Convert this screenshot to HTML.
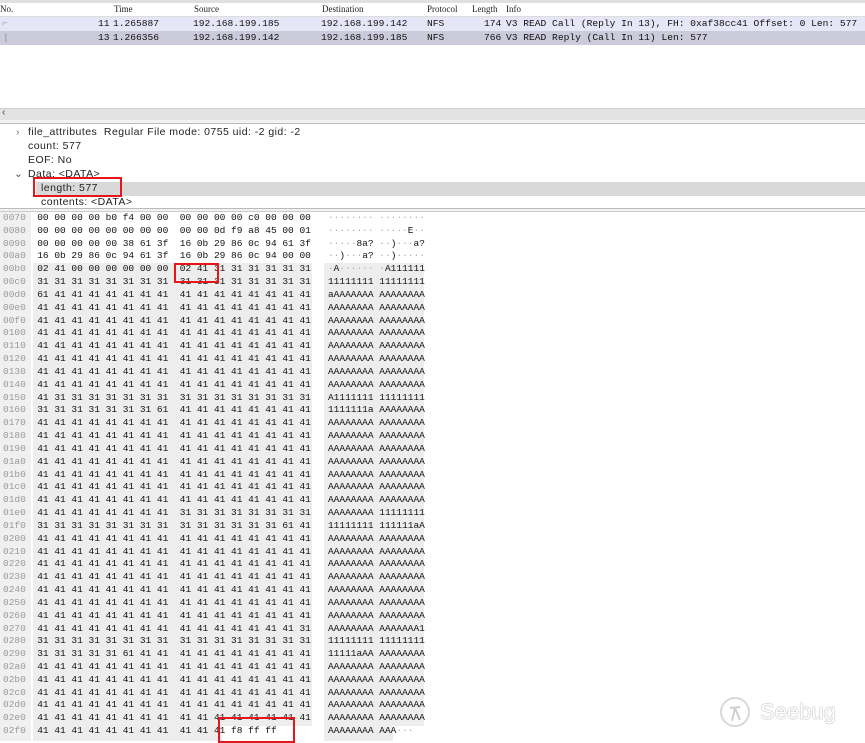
<!DOCTYPE html>
<html><head><meta charset="utf-8"><style>
*{margin:0;padding:0;box-sizing:border-box}
body{width:865px;height:741px;overflow:hidden;background:#fff;position:relative;font-family:"Liberation Sans",sans-serif}
.a{position:absolute}
.hdr{font-family:"Liberation Serif",serif;font-size:9px;color:#222;top:4px}
.pk{font-family:"Liberation Mono",monospace;font-size:9.6px;color:#111;height:14px;line-height:14px;width:865px;left:0}
.pk span{position:absolute;top:0}
.det{font-family:"Liberation Sans","DejaVu Sans",sans-serif;font-size:10.5px;letter-spacing:0.45px;color:#222;left:28px}
pre{font-family:"Liberation Mono",monospace;font-size:9.5px;line-height:12.83px;color:#111;position:absolute;left:3px;top:212px;margin:0}
.o{color:#9a9a9a}
.g{color:#aaa}
.box{position:absolute;border:2px solid #e8161b}
</style></head><body>
<!-- packet list -->
<div class="a" style="left:0;top:0;width:865px;height:3px;background:#e0e0e0"></div>
<div class="a" style="left:0;top:3px;width:865px;height:14px;background:#fff;border-bottom:1px solid #ddd"></div>
<div class="a hdr" style="left:0">No.</div>
<div class="a hdr" style="left:114px">Time</div>
<div class="a hdr" style="left:194px">Source</div>
<div class="a hdr" style="left:322px">Destination</div>
<div class="a hdr" style="left:427px">Protocol</div>
<div class="a hdr" style="left:472px">Length</div>
<div class="a hdr" style="left:506px">Info</div>
<div class="a pk" style="top:17px;background:#e6e6f8">
<span style="left:2px;color:#999">⌐</span><span style="left:98px">11</span><span style="left:113px">1.265887</span><span style="left:193px">192.168.199.185</span><span style="left:321px">192.168.199.142</span><span style="left:427px">NFS</span><span style="left:484px">174</span><span style="left:506px">V3 READ Call (Reply In 13), FH: 0xaf38cc41 Offset: 0 Len: 577</span></div>
<div class="a pk" style="top:31px;background:#cbcbdb">
<span style="left:3px;color:#888">|</span><span style="left:98px">13</span><span style="left:113px">1.266356</span><span style="left:193px">192.168.199.142</span><span style="left:321px">192.168.199.185</span><span style="left:427px">NFS</span><span style="left:484px">766</span><span style="left:506px">V3 READ Reply (Call In 11) Len: 577</span></div>
<div class="a" style="left:0;top:108px;width:865px;height:12px;background:#e3e3e3;border-top:1px solid #d0d0d0"></div>
<div class="a" style="left:2px;top:107px;font-size:10px;color:#444">‹</div>
<div class="a" style="left:0;top:120px;width:865px;height:4px;background:#f2f2f2;border-bottom:1px solid #bbb"></div>
<!-- details -->
<div class="a" style="left:36px;top:182px;width:829px;height:14px;background:#d9d9d9"></div>
<div class="a det" style="left:16px;top:126px;color:#777">›</div>
<div class="a det" style="top:126px">file_attributes&nbsp; Regular File mode: 0755 uid: -2 gid: -2</div>
<div class="a det" style="top:140px">count: 577</div>
<div class="a det" style="top:154px">EOF: No</div>
<div class="a det" style="left:14px;top:168px;color:#555">⌄</div>
<div class="a det" style="top:168px">Data: &lt;DATA&gt;</div>
<div class="a det" style="left:41px;top:182px">length: 577</div>
<div class="a det" style="left:41px;top:196px">contents: &lt;DATA&gt;</div>
<div class="box" style="left:33px;top:177px;width:89px;height:20px"></div>
<div class="a" style="left:0;top:208px;width:865px;height:4px;background:#f2f2f2;border-top:1px solid #bbb;border-bottom:1px solid #ccc"></div>
<!-- hex -->
<div class="a" style="left:0;top:212px;width:31px;height:529px;background:#f0f0f0"></div>
<div class="a" style="left:33px;top:263px;width:279px;height:478px;background:#ededed"></div>
<div class="a" style="left:324px;top:263px;width:100px;height:478px;background:#ededed"></div>
<div class="a" style="left:222px;top:726px;width:90px;height:15px;background:#fff"></div>
<div class="a" style="left:393px;top:726px;width:31px;height:15px;background:#fff"></div>
<pre><span class="o">0070</span>  00 00 00 00 b0 f4 00 00  00 00 00 00 c0 00 00 00   <span class="g">········ ········</span>
<span class="o">0080</span>  00 00 00 00 00 00 00 00  00 00 0d f9 a8 45 00 01   <span class="g">········ ·····</span>E<span class="g">··</span>
<span class="o">0090</span>  00 00 00 00 00 38 61 3f  16 0b 29 86 0c 94 61 3f   <span class="g">·····</span>8a? <span class="g">··</span>)<span class="g">···</span>a?
<span class="o">00a0</span>  16 0b 29 86 0c 94 61 3f  16 0b 29 86 0c 94 00 00   <span class="g">··</span>)<span class="g">···</span>a? <span class="g">··</span>)<span class="g">·····</span>
<span class="o">00b0</span>  02 41 00 00 00 00 00 00  02 41 31 31 31 31 31 31   <span class="g">·</span>A<span class="g">······ ·</span>A111111
<span class="o">00c0</span>  31 31 31 31 31 31 31 31  31 31 31 31 31 31 31 31   11111111 11111111
<span class="o">00d0</span>  61 41 41 41 41 41 41 41  41 41 41 41 41 41 41 41   aAAAAAAA AAAAAAAA
<span class="o">00e0</span>  41 41 41 41 41 41 41 41  41 41 41 41 41 41 41 41   AAAAAAAA AAAAAAAA
<span class="o">00f0</span>  41 41 41 41 41 41 41 41  41 41 41 41 41 41 41 41   AAAAAAAA AAAAAAAA
<span class="o">0100</span>  41 41 41 41 41 41 41 41  41 41 41 41 41 41 41 41   AAAAAAAA AAAAAAAA
<span class="o">0110</span>  41 41 41 41 41 41 41 41  41 41 41 41 41 41 41 41   AAAAAAAA AAAAAAAA
<span class="o">0120</span>  41 41 41 41 41 41 41 41  41 41 41 41 41 41 41 41   AAAAAAAA AAAAAAAA
<span class="o">0130</span>  41 41 41 41 41 41 41 41  41 41 41 41 41 41 41 41   AAAAAAAA AAAAAAAA
<span class="o">0140</span>  41 41 41 41 41 41 41 41  41 41 41 41 41 41 41 41   AAAAAAAA AAAAAAAA
<span class="o">0150</span>  41 31 31 31 31 31 31 31  31 31 31 31 31 31 31 31   A1111111 11111111
<span class="o">0160</span>  31 31 31 31 31 31 31 61  41 41 41 41 41 41 41 41   1111111a AAAAAAAA
<span class="o">0170</span>  41 41 41 41 41 41 41 41  41 41 41 41 41 41 41 41   AAAAAAAA AAAAAAAA
<span class="o">0180</span>  41 41 41 41 41 41 41 41  41 41 41 41 41 41 41 41   AAAAAAAA AAAAAAAA
<span class="o">0190</span>  41 41 41 41 41 41 41 41  41 41 41 41 41 41 41 41   AAAAAAAA AAAAAAAA
<span class="o">01a0</span>  41 41 41 41 41 41 41 41  41 41 41 41 41 41 41 41   AAAAAAAA AAAAAAAA
<span class="o">01b0</span>  41 41 41 41 41 41 41 41  41 41 41 41 41 41 41 41   AAAAAAAA AAAAAAAA
<span class="o">01c0</span>  41 41 41 41 41 41 41 41  41 41 41 41 41 41 41 41   AAAAAAAA AAAAAAAA
<span class="o">01d0</span>  41 41 41 41 41 41 41 41  41 41 41 41 41 41 41 41   AAAAAAAA AAAAAAAA
<span class="o">01e0</span>  41 41 41 41 41 41 41 41  31 31 31 31 31 31 31 31   AAAAAAAA 11111111
<span class="o">01f0</span>  31 31 31 31 31 31 31 31  31 31 31 31 31 31 61 41   11111111 111111aA
<span class="o">0200</span>  41 41 41 41 41 41 41 41  41 41 41 41 41 41 41 41   AAAAAAAA AAAAAAAA
<span class="o">0210</span>  41 41 41 41 41 41 41 41  41 41 41 41 41 41 41 41   AAAAAAAA AAAAAAAA
<span class="o">0220</span>  41 41 41 41 41 41 41 41  41 41 41 41 41 41 41 41   AAAAAAAA AAAAAAAA
<span class="o">0230</span>  41 41 41 41 41 41 41 41  41 41 41 41 41 41 41 41   AAAAAAAA AAAAAAAA
<span class="o">0240</span>  41 41 41 41 41 41 41 41  41 41 41 41 41 41 41 41   AAAAAAAA AAAAAAAA
<span class="o">0250</span>  41 41 41 41 41 41 41 41  41 41 41 41 41 41 41 41   AAAAAAAA AAAAAAAA
<span class="o">0260</span>  41 41 41 41 41 41 41 41  41 41 41 41 41 41 41 41   AAAAAAAA AAAAAAAA
<span class="o">0270</span>  41 41 41 41 41 41 41 41  41 41 41 41 41 41 41 31   AAAAAAAA AAAAAAA1
<span class="o">0280</span>  31 31 31 31 31 31 31 31  31 31 31 31 31 31 31 31   11111111 11111111
<span class="o">0290</span>  31 31 31 31 31 61 41 41  41 41 41 41 41 41 41 41   11111aAA AAAAAAAA
<span class="o">02a0</span>  41 41 41 41 41 41 41 41  41 41 41 41 41 41 41 41   AAAAAAAA AAAAAAAA
<span class="o">02b0</span>  41 41 41 41 41 41 41 41  41 41 41 41 41 41 41 41   AAAAAAAA AAAAAAAA
<span class="o">02c0</span>  41 41 41 41 41 41 41 41  41 41 41 41 41 41 41 41   AAAAAAAA AAAAAAAA
<span class="o">02d0</span>  41 41 41 41 41 41 41 41  41 41 41 41 41 41 41 41   AAAAAAAA AAAAAAAA
<span class="o">02e0</span>  41 41 41 41 41 41 41 41  41 41 41 41 41 41 41 41   AAAAAAAA AAAAAAAA
<span class="o">02f0</span>  41 41 41 41 41 41 41 41  41 41 41 f8 ff ff         AAAAAAAA AAA<span class="g">···</span></pre>
<div class="box" style="left:174px;top:263px;width:45px;height:20px"></div>
<div class="box" style="left:218px;top:717px;width:77px;height:26px"></div>
<!-- watermark -->
<svg class="a" style="left:718px;top:694px" width="36" height="36" viewBox="0 0 36 36">
<circle cx="17" cy="18" r="14" fill="none" stroke="#d8d8d8" stroke-width="2"/>
<path d="M12 14 L22 13 M17 14 L14 27 M17 14 L22 26" fill="none" stroke="#d0d0d0" stroke-width="2"/>
</svg>
<div class="a" style="left:760px;top:699px;font-size:22px;color:#fff;text-shadow:0 0 1px #999,0 0 1px #999">Seebug</div>
</body></html>
